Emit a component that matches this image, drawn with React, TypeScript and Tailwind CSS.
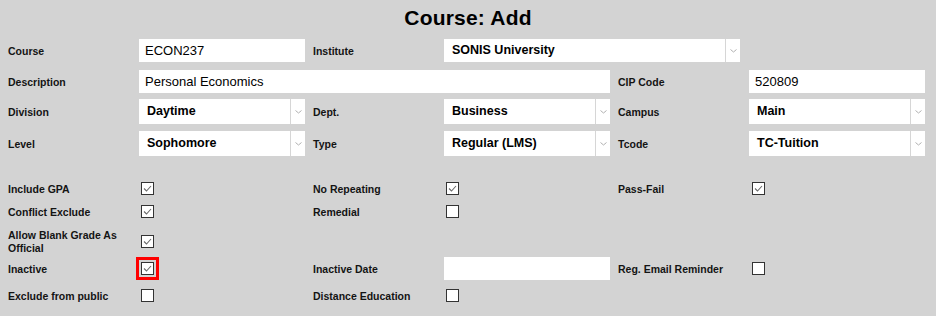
import React from 'react';

const grid = 'grid grid-cols-[131px_166px_139px_166px_139px_176px] ml-2 items-center';

function Label({ children, first }: { children: React.ReactNode; first?: boolean }) {
    return (
        <div className={`text-[10.5px] font-bold leading-[13px] text-[#141414] pr-2 pt-[2px] ${first ? '' : 'pl-2'}`}>
            {children}
        </div>
    );
}

function TextInput({ value, className = '' }: { value?: string; className?: string }) {
    return (
        <div className={`h-full bg-white flex items-center pl-[6px] text-[13px] text-black ${className}`}>
            {value}
        </div>
    );
}

function Select({ value, className = '' }: { value: string; className?: string }) {
    return (
        <div className={`h-full bg-white flex items-stretch ${className}`}>
            <div className="flex-1 flex items-center pl-2 text-[12.5px] font-bold text-black">{value}</div>
            <div className="w-[15px] border-l border-[#d6d6d6] flex items-center justify-center">
                <svg width="7" height="4" viewBox="0 0 7 4">
                    <path d="M0.5 0.5 L3.5 3 L6.5 0.5" fill="none" stroke="#b0b0b0" strokeWidth="1" />
                </svg>
            </div>
        </div>
    );
}

function Check({ checked, highlight, offset = 'ml-[2px]' }: { checked?: boolean; highlight?: boolean; offset?: string }) {
    return (
        <div
            className={`w-[13px] h-[13px] bg-white border border-[#333] flex items-center justify-center ${offset} ${
                highlight ? 'outline-3 outline-[#ff0000] outline-offset-2' : ''
            }`}
        >
            {checked && (
                <svg width="11" height="11" viewBox="0 0 11 11">
                    <path d="M2 5.5 L4.5 8 L9 3" fill="none" stroke="#6a6a6a" strokeWidth="1.1" />
                </svg>
            )}
        </div>
    );
}

export default function App() {
    return (
        <div className="w-[936px] h-[316px] bg-[#d3d3d3] overflow-hidden" style={{ fontFamily: '"Liberation Sans", Arial, sans-serif' }}>
            <div className="h-[39px] flex items-center justify-center pb-[3px]">
                <h1 className="text-[21px] font-bold text-black tracking-[0.2px]">Course: Add</h1>
            </div>

            <div className={`${grid} h-[23px]`}>
                <Label first>Course</Label>
                <TextInput value="ECON237" />
                <Label>Institute</Label>
                <div className="col-span-2 h-full">
                    <Select value="SONIS University" className="w-[296px]" />
                </div>
            </div>

            <div className={`${grid} h-[23px] mt-[8px]`}>
                <Label first>Description</Label>
                <TextInput value="Personal Economics" className="col-span-3" />
                <Label>CIP Code</Label>
                <TextInput value="520809" />
            </div>

            <div className={`${grid} h-[25px] mt-[6px]`}>
                <Label first>Division</Label>
                <Select value="Daytime" />
                <Label>Dept.</Label>
                <Select value="Business" />
                <Label>Campus</Label>
                <Select value="Main" />
            </div>

            <div className={`${grid} h-[25px] mt-[7px]`}>
                <Label first>Level</Label>
                <Select value="Sophomore" />
                <Label>Type</Label>
                <Select value="Regular (LMS)" />
                <Label>Tcode</Label>
                <Select value="TC-Tuition" />
            </div>

            <div className={`${grid} h-[23px] mt-[21px]`}>
                <Label first>Include GPA</Label>
                <Check checked />
                <Label>No Repeating</Label>
                <Check checked />
                <Label>Pass-Fail</Label>
                <Check checked offset="ml-[3px]" />
            </div>

            <div className={`${grid} h-[23px]`}>
                <Label first>Conflict Exclude</Label>
                <Check checked />
                <Label>Remedial</Label>
                <Check />
                <div />
                <div />
            </div>

            <div className={`${grid} h-[23px] mt-[4px]`}>
                <Label first>Allow Blank Grade As Official</Label>
                <Check checked />
                <div />
                <div />
                <div />
                <div />
            </div>

            <div className={`${grid} h-[23px] mt-[7px]`}>
                <Label first>Inactive</Label>
                <Check checked highlight />
                <Label>Inactive Date</Label>
                <TextInput />
                <Label>Reg. Email Reminder</Label>
                <Check offset="ml-[3px]" />
            </div>

            <div className={`${grid} h-[23px] mt-[4px]`}>
                <Label first>Exclude from public</Label>
                <Check />
                <Label>Distance Education</Label>
                <Check />
                <div />
                <div />
            </div>
        </div>
    );
}
